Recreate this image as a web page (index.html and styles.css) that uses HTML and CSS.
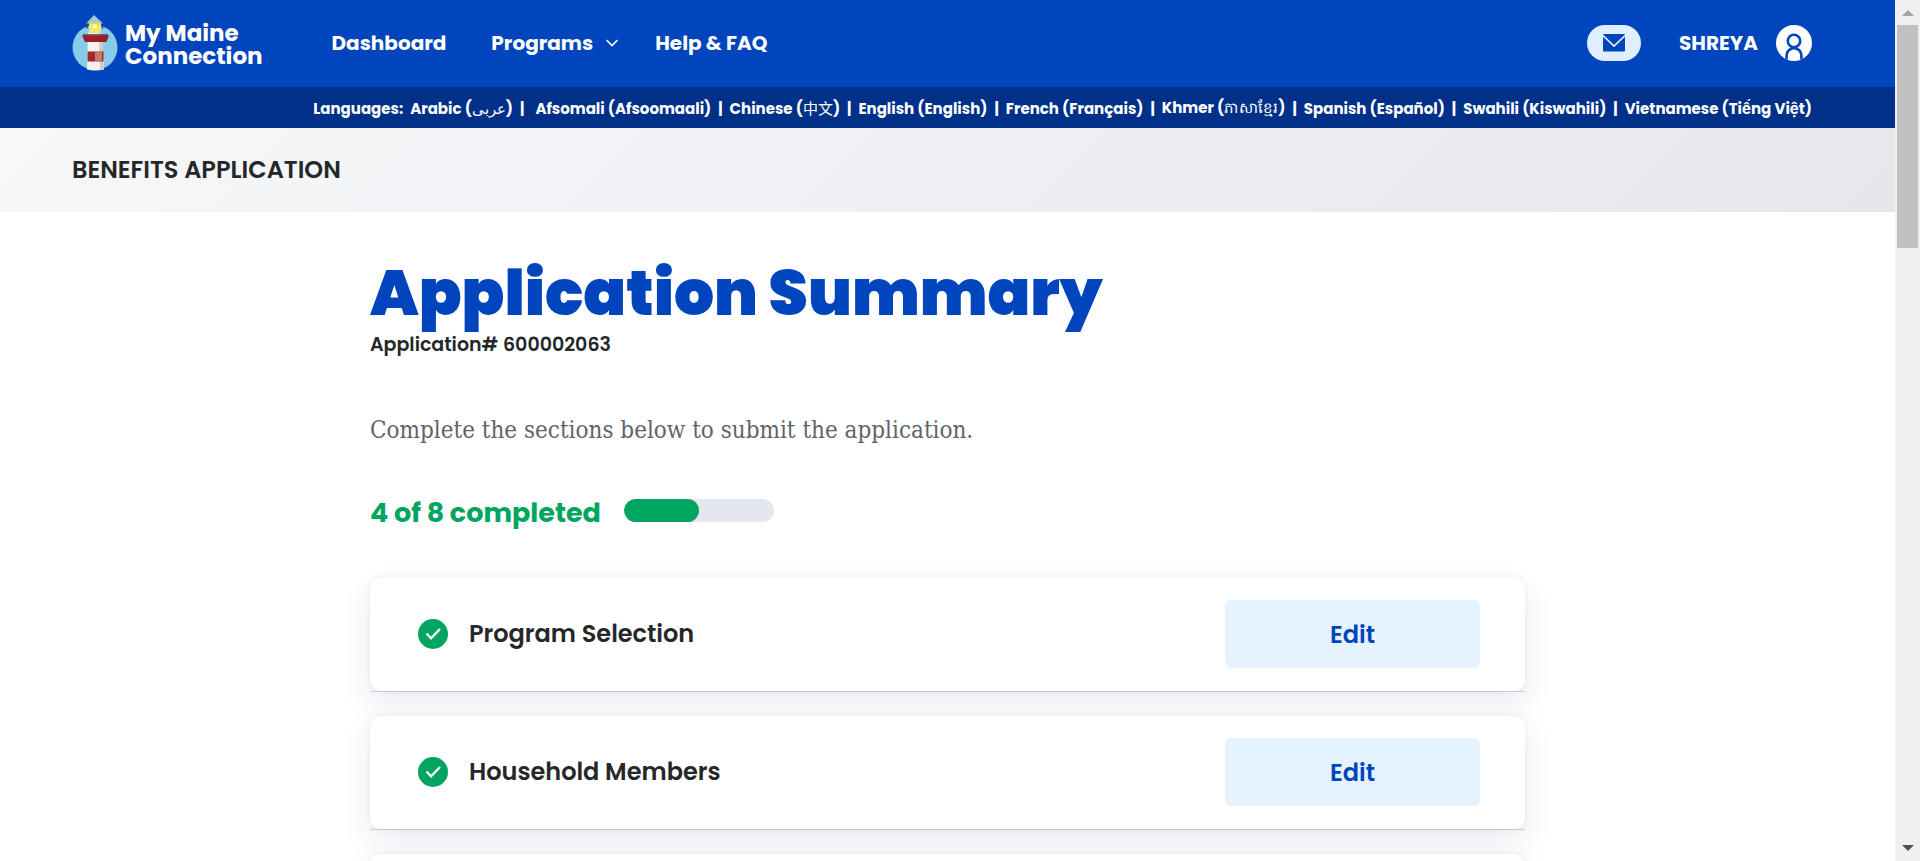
FILE: index.html
```html
<!DOCTYPE html>
<html lang="en">
<head>
<meta charset="utf-8">
<title>Application Summary - My Maine Connection</title>
<link rel="stylesheet" href="styles.css">
</head>
<body>
<div class="viewport">
  <div class="page">
    <header class="header">
      <a class="logo" href="#">
        <svg class="logo-mark" width="46" height="56" viewBox="0 0 46 56" aria-hidden="true">
          <circle cx="23" cy="32.500" r="22.500" fill="#87cdea"/>
          <path d="M16 18h14l2 36.500q-9 2-17 0z" fill="#f6f1ea"/>
          <path d="M27 18h3l2 36.500-4 .5z" fill="#d3c9c0"/>
          <path d="M15.500 36.500h16v10h-16z" fill="#a3282c"/>
          <path d="M23 36.500h7v10h-7z" fill="#c47a6c"/>
          <path d="M10 20.500h27l-2.500 6.500H13z" fill="#9c1f28"/>
          <path d="M11 20h25" stroke="#5f3038" stroke-width="1.500"/>
          <path d="M17 7.500h12v11H17z" fill="#e9dfa8"/>
          <circle cx="23" cy="11.500" r="4.600" fill="#ffe92e"/>
          <circle cx="23" cy="11.500" r="2" fill="#fffde0"/>
          <path d="M14 8.500 22 0l9 8.500z" fill="#9fcfc4"/>
          <path d="M15 8.500v5M30.500 8.500v5" stroke="#2c4a58" stroke-width="1.500"/>
        </svg>
        <span class="logo-text">My Maine<br>Connection</span>
      </a>
      <nav class="nav">
        <a href="#">Dashboard</a>
        <a href="#" class="nav-programs">Programs
          <svg width="14" height="10" viewBox="0 0 14 10" aria-hidden="true"><path d="M1.500 2 7 7.500 12.500 2" fill="none" stroke="#fff" stroke-width="1.600"/></svg>
        </a>
        <a href="#">Help &amp; FAQ</a>
      </nav>
      <div class="account">
        <button class="mail" type="button" aria-label="Messages">
          <svg width="22" height="18" viewBox="0 0 22 18" aria-hidden="true"><rect width="22" height="17.500" rx="1" fill="#0044be"/><path d="M0 1.500 11 12 22 1.500" fill="none" stroke="#dfefff" stroke-width="1.700"/></svg>
        </button>
        <a class="user" href="#">SHREYA
          <svg width="36" height="36" viewBox="0 0 36 36" aria-hidden="true">
            <circle cx="18" cy="18" r="18" fill="#fff"/>
            <circle cx="18" cy="16" r="6.200" fill="none" stroke="#0044be" stroke-width="2.600"/>
            <path d="M10.600 34.500v-4a7.400 7.400 0 0 1 14.800 0v4" fill="none" stroke="#0044be" stroke-width="2.600"/>
          </svg>
        </a>
      </div>
    </header>
    <nav class="languages" aria-label="Languages">
      <span>Languages:</span>
      <a href="#">Arabic (<span class="foreign">عربى</span>)</a><span class="wide">|</span>
      <a href="#">Afsomali (Afsoomaali)</a><span>|</span>
      <a href="#">Chinese (<span class="foreign">中文</span>)</a><span>|</span>
      <a href="#">English (English)</a><span>|</span>
      <a href="#">French (Français)</a><span>|</span>
      <a href="#">Khmer (<span class="foreign">ភាសាខ្មែរ</span>)</a><span>|</span>
      <a href="#">Spanish (Español)</a><span>|</span>
      <a href="#">Swahili (Kiswahili)</a><span>|</span>
      <a href="#">Vietnamese (Tiếng Việt)</a>
    </nav>
    <div class="banner">BENEFITS APPLICATION</div>
    <main class="content">
      <h1>Application Summary</h1>
      <p class="number">Application# 600002063</p>
      <p class="intro">Complete the sections below to submit the application.</p>
      <div class="progress">
        <span id="progress-label">4 of 8 completed</span>
        <div class="track" role="progressbar" aria-labelledby="progress-label" aria-valuenow="4" aria-valuemax="8"><div class="fill" style="width:50%"></div></div>
      </div>
      <section class="item">
        <div class="card">
          <svg class="check" width="30" height="30" viewBox="0 0 30 30" aria-hidden="true"><circle cx="15" cy="15" r="15" fill="#00a560"/><path d="M8.500 14.500 13 19.300 22 10" fill="none" stroke="#fff" stroke-width="2.300"/></svg>
          <h2>Program Selection</h2>
          <button class="edit" type="button">Edit</button>
        </div>
      </section>
      <section class="item">
        <div class="card">
          <svg class="check" width="30" height="30" viewBox="0 0 30 30" aria-hidden="true"><circle cx="15" cy="15" r="15" fill="#00a560"/><path d="M8.500 14.500 13 19.300 22 10" fill="none" stroke="#fff" stroke-width="2.300"/></svg>
          <h2>Household Members</h2>
          <button class="edit" type="button">Edit</button>
        </div>
      </section>
      <section class="item"><div class="card"></div></section>
    </main>
  </div>
  <div class="scrollbar" aria-hidden="true">
    <svg width="12" height="6" viewBox="0 0 12 6"><path d="M0 6 6 0l6 6z" fill="#a3a3a3"/></svg>
    <div class="rail"><div class="thumb"></div></div>
    <svg width="12" height="6" viewBox="0 0 12 6"><path d="M0 0h12L6 6z" fill="#505050"/></svg>
  </div>
</div>
</body>
</html>
```
FILE: styles.css
```css
* { box-sizing: border-box; }
body {
  margin: 0;
  font-family: Poppins, Inter, "Liberation Sans", "Noto Sans CJK SC", sans-serif;
  color: #25272a;
  background: #fff;
}
a { color: inherit; text-decoration: none; }
button { border: 0; padding: 0; font: inherit; cursor: pointer; }
h1, h2, p { margin: 0; }
svg { flex: none; display: block; }

.viewport { display: flex; height: 100vh; overflow: hidden; }
.page { flex: 1; min-width: 0; overflow: hidden; }

.header {
  display: flex;
  align-items: center;
  min-height: 87px;
  padding: 0 83px 2px 72px;
  background: #0044be;
  color: #fff;
  font-size: 20px;
  font-weight: 700;
}
.logo { display: flex; align-items: center; gap: 7px; margin-right: 69px; }
.logo-text { padding-top: 4px; font-size: 23px; line-height: 23px; }
.nav { display: flex; align-items: center; gap: 45px; }
.nav-programs { display: flex; align-items: center; gap: 12px; margin-right: -9px; }
.account { display: flex; align-items: center; gap: 38px; margin-left: auto; }
.mail {
  display: grid;
  place-items: center;
  width: 54px;
  height: 36px;
  border-radius: 18px;
  background: #dfefff;
}
.user { display: flex; align-items: center; gap: 18px; }

.languages {
  display: flex;
  align-items: center;
  justify-content: flex-end;
  gap: 7px;
  min-height: 41px;
  padding: 1px 83px 0 24px;
  background: #003087;
  color: #fff;
  font-size: 15px;
  font-weight: 700;
  white-space: nowrap;
}
.foreign { font-weight: 400; }
.wide { margin-right: 4px; }

.banner {
  padding: 27px 72px;
  background: linear-gradient(135deg, #f6f8fa, #e6e7ec);
  font-size: 24px;
  line-height: 30px;
  font-weight: 600;
}

.content { max-width: 1155px; margin: 0 auto; padding-top: 46px; }
h1 { color: #0044be; font-size: 63px; line-height: 70px; font-weight: 900; }
.number { font-size: 19px; line-height: 34px; font-weight: 600; }
.intro {
  margin-top: 52px;
  color: #626469;
  font-family: "DejaVu Serif Condensed", "DejaVu Serif", serif;
  font-size: 24px;
  line-height: 32px;
}
.progress {
  display: flex;
  align-items: center;
  gap: 23px;
  margin: 46px 0 44px;
  color: #00a560;
  font-size: 27px;
  line-height: 42px;
  font-weight: 700;
}
.track {
  width: 150px;
  height: 23px;
  margin-bottom: 6px;
  border-radius: 12px;
  background: #e4e7ef;
  overflow: hidden;
}
.fill { height: 100%; border-radius: 12px; background: #00a560; }

.item { margin-bottom: 24px; border-bottom: 1px solid #d5dae3; }
.card {
  display: flex;
  align-items: center;
  min-height: 113px;
  padding: 22px 45px 23px 48px;
  border-radius: 12px;
  background: rgba(255, 255, 255, .8);
  box-shadow: 0 0 6px rgba(40, 60, 110, .08), 0 12px 30px rgba(40, 60, 110, .1);
}
h2 { margin-left: 21px; font-size: 24px; line-height: 30px; font-weight: 600; }
.edit {
  width: 255px;
  height: 68px;
  margin-left: auto;
  border-radius: 6px;
  background: #e5f2ff;
  color: #0044be;
  font-size: 24px;
  font-weight: 600;
}

.scrollbar {
  display: flex;
  flex-direction: column;
  align-items: center;
  gap: 9px;
  width: 25px;
  padding: 10px 2px;
  background: #f0f0f0;
}
.rail { flex: 1; align-self: stretch; }
.thumb { height: 27.5%; background: #c1c1c1; }
```
